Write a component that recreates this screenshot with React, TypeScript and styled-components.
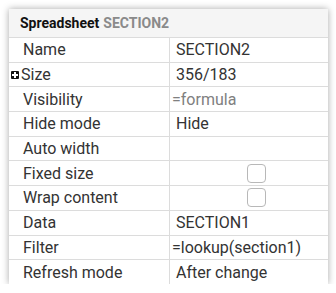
import styled, { createGlobalStyle } from "styled-components";

const GlobalStyle = createGlobalStyle`
  body {
    margin: 0;
    background: #ffffff;
    font-family: Roboto, "Liberation Sans", sans-serif;
  }
`;

const Panel = styled.div`
  margin: 9px 0 0 9px;
  width: 319px;
  background: #fff;
  box-shadow: 0 0 7px rgba(0, 0, 0, 0.35);
`;

const Header = styled.div`
  height: 28px;
  display: flex;
  align-items: center;
  padding-left: 11px;
  background: #f5f5f5;
  border-bottom: 1px solid #dcdcdc;
  font-size: 14px;
  font-weight: 700;
  color: #111;

  & .sub {
    margin-left: 4px;
    color: #8a8a8a;
  }
`;

const Grid = styled.div`
  display: grid;
  grid-template-columns: 161px 1fr;
`;

const Cell = styled.div<{ $last?: boolean }>`
  height: 23.7px;
  display: flex;
  align-items: center;
  border-bottom: ${({ $last }) => ($last ? "none" : "1px solid #dcdcdc")};
  font-size: 16px;
  color: #333;
  white-space: nowrap;
`;

const Label = styled(Cell)<{ $expand?: boolean }>`
  padding-left: ${({ $expand }) => ($expand ? "2px" : "14px")};
  border-right: 1px solid #dcdcdc;
`;

const Value = styled(Cell)<{ $formula?: boolean; $muted?: boolean }>`
  padding-left: ${({ $formula }) => ($formula ? "2px" : "6px")};
  color: ${({ $muted }) => ($muted ? "#808080" : "#333")};
`;

const Expand = styled.span`
  position: relative;
  flex: none;
  width: 8px;
  height: 8px;
  margin: 1px 2px 0 0;
  background: #111;
  border-radius: 1px;

  &::before,
  &::after {
    content: "";
    position: absolute;
    background: #fff;
  }
  &::before {
    left: 1px;
    top: 3px;
    width: 6px;
    height: 2px;
  }
  &::after {
    left: 3px;
    top: 1px;
    width: 2px;
    height: 6px;
  }
`;

const Check = styled.span`
  margin-left: 71px;
  width: 17px;
  height: 17px;
  border: 1px solid #b8b8b8;
  border-radius: 4px;
  background: #fff;
`;

type Row = {
  label: string;
  value?: string;
  formula?: boolean;
  muted?: boolean;
  check?: boolean;
  expand?: boolean;
};

const rows: Row[] = [
  { label: "Name", value: "SECTION2" },
  { label: "Size", value: "356/183", expand: true },
  { label: "Visibility", value: "=formula", formula: true, muted: true },
  { label: "Hide mode", value: "Hide" },
  { label: "Auto width" },
  { label: "Fixed size", check: true },
  { label: "Wrap content", check: true },
  { label: "Data", value: "SECTION1" },
  { label: "Filter", value: "=lookup(section1)", formula: true },
  { label: "Refresh mode", value: "After change" },
];

export default function App() {
  return (
    <>
      <GlobalStyle />
      <Panel>
        <Header>
          Spreadsheet<span className="sub">SECTION2</span>
        </Header>
        <Grid>
          {rows.map((r, i) => {
            const last = i === rows.length - 1;
            return [
              <Label key={r.label + "l"} $last={last} $expand={r.expand}>
                {r.expand && <Expand />}
                {r.label}
              </Label>,
              <Value
                key={r.label + "v"}
                $last={last}
                $formula={r.formula}
                $muted={r.muted}
              >
                {r.check ? <Check /> : r.value}
              </Value>,
            ];
          })}
        </Grid>
      </Panel>
    </>
  );
}
